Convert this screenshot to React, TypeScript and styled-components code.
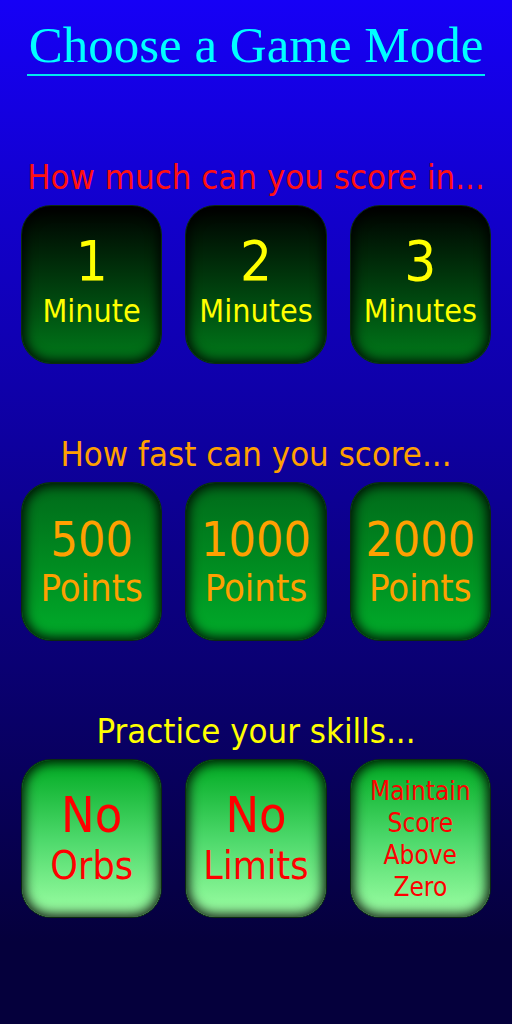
import React from "react";
import styled, { createGlobalStyle } from "styled-components";

const Global = createGlobalStyle`
  html, body {
    margin: 0;
    padding: 0;
  }
  body {
    font-family: "DejaVu Sans Condensed", "DejaVu Sans", sans-serif;
  }
`;

const Page = styled.div`
  width: 512px;
  min-height: 1024px;
  background: linear-gradient(180deg, #1600f6 0%, #05003c 92%, #05003c 100%);
  display: flex;
  flex-direction: column;
  align-items: center;
  box-sizing: border-box;
  padding-top: 18px;
`;

const Title = styled.h1`
  margin: 0;
  font-family: "Liberation Serif", serif;
  font-weight: normal;
  font-size: 51px;
  line-height: 54px;
  color: #00ffff;
  border-bottom: 2px solid #00e8f0;
  padding: 0 2px 2px;
`;

const Section = styled.section<{ $top: number }>`
  width: 100%;
  margin-top: ${p => p.$top}px;
  display: flex;
  flex-direction: column;
  align-items: center;
`;

const Heading = styled.h2<{ $color: string }>`
  margin: 0 0 8px;
  font-weight: normal;
  font-size: 34.5px;
  line-height: 40px;
  color: ${p => p.$color};
  white-space: nowrap;
`;

const Row = styled.div`
  width: 100%;
  box-sizing: border-box;
  padding: 0 21px;
  display: grid;
  grid-template-columns: repeat(3, 1fr);
  gap: 23px;
`;

const tones = {
  dark: "linear-gradient(180deg, #000000 0%, #00300a 40%, #007a1a 100%)",
  mid: "linear-gradient(180deg, #006a1a 0%, #008a20 50%, #00ac2a 100%)",
  light: "linear-gradient(180deg, #00aa22 0%, #4cd86a 50%, #9dffa4 100%)",
};

const ModeButton = styled.button<{
  $tone: keyof typeof tones;
  $color: string;
  $lift?: number;
}>`
  height: 159px;
  border: 1px solid #0b2a10;
  border-radius: 30px;
  background: ${p => tones[p.$tone]};
  box-shadow: inset 0 0 12px 3px rgba(0, 0, 0, 0.9);
  color: ${p => p.$color};
  font-family: inherit;
  display: flex;
  flex-direction: column;
  align-items: center;
  justify-content: center;
  padding: 0 0 ${p => p.$lift ?? 0}px;
  cursor: pointer;
`;

const Big = styled.span<{ $size: number }>`
  font-size: ${p => p.$size}px;
  line-height: ${p => p.$size + 4}px;
`;

const Label = styled.span<{ $size: number }>`
  font-size: ${p => p.$size}px;
  line-height: ${p => p.$size + 8}px;
`;

const Small = styled.span`
  font-size: 26px;
  line-height: 32px;
  text-align: center;
`;

const minutes = [
  ["1", "Minute"],
  ["2", "Minutes"],
  ["3", "Minutes"],
];

const points = ["500", "1000", "2000"];

const App: React.FC = () => (
  <Page>
    <Global />
    <Title>Choose a Game Mode</Title>

    <Section $top={81}>
      <Heading $color="#ff1010">How much can you score in...</Heading>
      <Row>
        {minutes.map(([n, label]) => (
          <ModeButton key={n} $tone="dark" $color="#ffff00" $lift={8}>
            <Big $size={56}>{n}</Big>
            <Label $size={32}>{label}</Label>
          </ModeButton>
        ))}
      </Row>
    </Section>

    <Section $top={70}>
      <Heading $color="#ffa000">How fast can you score...</Heading>
      <Row>
        {points.map(n => (
          <ModeButton key={n} $tone="mid" $color="#ffa000">
            <Big $size={48}>{n}</Big>
            <Label $size={38}>Points</Label>
          </ModeButton>
        ))}
      </Row>
    </Section>

    <Section $top={70}>
      <Heading $color="#ffff00">Practice your skills...</Heading>
      <Row>
        <ModeButton $tone="light" $color="#ff0000">
          <Big $size={50}>No</Big>
          <Label $size={39}>Orbs</Label>
        </ModeButton>
        <ModeButton $tone="light" $color="#ff0000">
          <Big $size={50}>No</Big>
          <Label $size={39}>Limits</Label>
        </ModeButton>
        <ModeButton $tone="light" $color="#ff0000">
          <Small>
            Maintain
            <br />
            Score
            <br />
            Above
            <br />
            Zero
          </Small>
        </ModeButton>
      </Row>
    </Section>
  </Page>
);

export default App;
